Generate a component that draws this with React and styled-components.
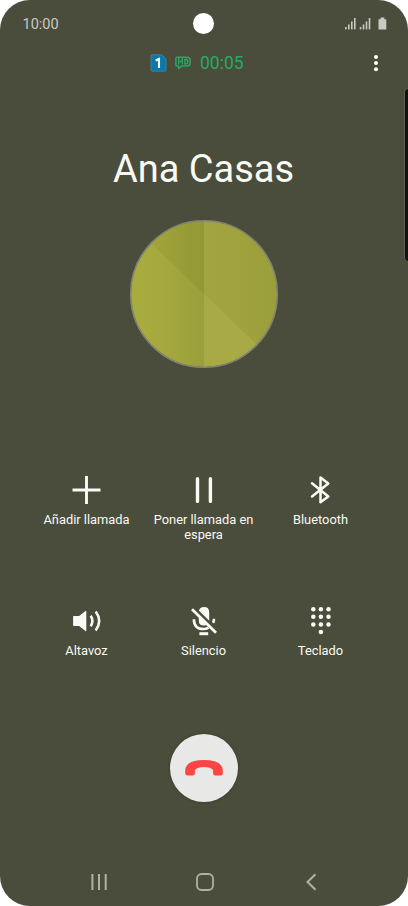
import React from "react";
import styled, { createGlobalStyle } from "styled-components";

const GlobalStyle = createGlobalStyle`
  * { box-sizing: border-box; }
  body { margin: 0; background: #fff; font-family: Roboto, "Noto Sans", sans-serif; }
  svg { display: block; flex: none; }
`;

const Screen = styled.main`
  position: relative;
  display: flex;
  flex-direction: column;
  width: 408px;
  height: 906px;
  overflow: hidden;
  border-radius: 30px;
  background: #4a4d3b;
  color: #fafaf5;
`;

const StatusBar = styled.header`
  display: grid;
  grid-template-columns: 1fr 21px 1fr;
  align-items: center;
  height: 47px;
  padding: 0 21.5px 0 22.5px;
  color: #c9cac2;
`;

const Clock = styled.time`
  padding-top: 1px;
  font-size: 14.5px;
  line-height: 17px;
`;

const Camera = styled.span`
  width: 21px;
  height: 21px;
  margin-left: -1px;
  border-radius: 50%;
  background: #fff;
`;

const StatusIcons = styled.div`
  display: flex;
  justify-content: flex-end;
`;

const CallBar = styled.section`
  display: flex;
  align-items: center;
  height: 32px;
  padding: 0 27px 0 150px;
  color: #28a866;
`;

const HdIcon = styled.svg`
  margin: 0 9px 0 8px;
`;

const Timer = styled.span`
  flex: 1;
  font-size: 17.5px;
  line-height: 20px;
`;

const MenuButton = styled.button`
  padding: 0;
  border: 0;
  background: none;
  color: #fff;
`;

const CallerName = styled.h1`
  margin: 67px 1px 0 0;
  font-size: 38px;
  font-weight: 400;
  line-height: 46px;
  text-align: center;
`;

const Avatar = styled.div`
  align-self: center;
  width: 150px;
  height: 150px;
  margin: 27px 1px 0 0;
`;

const Actions = styled.section`
  display: grid;
  grid-template-columns: repeat(3, 117px);
  grid-auto-rows: 131px;
  margin: 101px 0 0 28px;
`;

const Action = styled.button`
  display: flex;
  flex-direction: column;
  align-items: center;
  padding: 0;
  border: 0;
  background: none;
  color: #fafaf5;
  font-family: inherit;
`;

const ActionLabel = styled.span`
  max-width: 110px;
  margin-top: 2px;
  font-size: 12.85px;
  line-height: 15px;
  text-align: center;
`;

const EndCall = styled.button`
  display: grid;
  place-items: center;
  align-self: center;
  width: 68px;
  height: 68px;
  margin: 2px 1px 0 0;
  padding: 0;
  border: 0;
  border-radius: 50%;
  background: #e8e8e6;
  box-shadow: 0 0 3px rgba(20, 22, 14, 0.35);
`;

const NavBar = styled.nav`
  display: flex;
  justify-content: space-between;
  margin-top: auto;
  height: 48px;
  padding: 14px 87px 0 87.5px;
`;

const SideKey = styled.span`
  position: absolute;
  top: 88px;
  right: -4px;
  width: 8px;
  height: 174px;
  border: 1px solid #5f6253;
  border-radius: 4px;
  background: #12130f;
`;

const Signal = ({ x }) => (
  <g transform={`translate(${x} 0)`} fill="currentColor">
    <rect x="0" y="9" width="1.6" height="2.4" />
    <rect x="3" y="6.5" width="1.6" height="4.9" />
    <rect x="6" y="3.5" width="1.6" height="7.9" />
    <rect x="9" y="0" width="1.6" height="11.4" />
  </g>
);

const icons = {
  add: <path d="M19.5 6v28M5.5 20h28" strokeWidth="2.9" />,
  hold: <path d="M13.5 8.8v22.6M26.4 8.8v22.6" strokeWidth="3.4" strokeLinecap="round" />,
  bluetooth: (
    <path d="M11 13.3 27.3 26.5 19.5 32.3V7.4L27.3 13.5 11 26.5" strokeWidth="2.5" strokeLinecap="round" strokeLinejoin="round" />
  ),
  speaker: (
    <>
      <path d="M6.9 15h5.2l6.4-5q.8-.5.8.5v19q0 1-.8.5l-6.4-5H6.9q-.8 0-.8-.8v-8.4q0-.8.8-.8Z" fill="currentColor" stroke="none" />
      <path d="M23.7 14.8q3.4 5.2 0 10.4M28.7 10.5q7 9.5 0 19" strokeWidth="2.6" />
    </>
  ),
  mute: (
    <>
      <path d="M14.8 9.4Q16.3 6 20 6q5.2 0 5.2 5.2v8.5ZM14.8 13.4 23.7 23.2Q22 24.6 20 24.6q-5.2 0-5.2-5.2Z" fill="currentColor" stroke="none" />
      <path d="M9.9 18.2q0 9.8 9.6 9.8 2.8 0 5-1.4M30 17.8q0 2.2-.9 4" strokeWidth="2.6" />
      <path d="M8 8.2 32 31.7" strokeWidth="2.8" />
      <path d="M15.4 32.7h8.8" strokeWidth="3" />
    </>
  ),
  keypad: (
    <g fill="currentColor" stroke="none">
      {[8.3, 15.8, 23.4].flatMap((y) => [12.3, 19.9, 27.5].map((x) => <circle key={`${x}-${y}`} cx={x} cy={y} r="2.25" />))}
      <circle cx="19.9" cy="31" r="2.25" />
    </g>
  ),
};

const actions = [
  ["add", "Añadir llamada"],
  ["hold", "Poner llamada en espera"],
  ["bluetooth", "Bluetooth"],
  ["speaker", "Altavoz"],
  ["mute", "Silencio"],
  ["keypad", "Teclado"],
];

export default function App() {
  return (
    <>
      <GlobalStyle />
      <Screen>
        <StatusBar>
          <Clock>10:00</Clock>
          <Camera />
          <StatusIcons>
            <svg width="42" height="13" viewBox="0 0 42 13">
              <g transform="translate(0 1)">
                <Signal x={0} />
                <Signal x={14.7} />
              </g>
              <path d="M33.5 2.2h2V.6h3.8v1.6h2v10.3h-7.8Z" fill="currentColor" />
            </svg>
          </StatusIcons>
        </StatusBar>

        <CallBar>
          <svg width="17" height="18" viewBox="0 0 17 18">
            <path d="M1 2q0-1.2 1.2-1.2H12L16 5v11q0 1.2-1.2 1.2H2.2Q1 17.2 1 16Z" fill="#0878ad" stroke="#4c97b8" strokeWidth=".6" />
            <path d="M5.7 6.5 9 5v9" fill="none" stroke="#fff" strokeWidth="2.1" />
          </svg>
          <HdIcon width="16" height="16" viewBox="0 0 16 16" fill="none" stroke="currentColor" strokeWidth="1.5" strokeLinejoin="round">
            <path d="M3.6 11H2q-1.1 0-1.1-1.1V3.4Q.9 2.2 2 2.2h10.2q2.9 0 2.9 2.9v3q0 2.9-2.9 2.9H6.5l-2.9 2.6Z" />
            <path d="M3.7 3v6.5M3.7 6.4h3.6M7.3 3v6.5M9.9 4.2V9h1q1.8 0 1.8-1.7V5.9q0-1.7-1.8-1.7Z" strokeWidth="1.4" />
          </HdIcon>
          <Timer>00:05</Timer>
          <MenuButton aria-label="Más opciones">
            <svg width="10" height="18" viewBox="0 0 10 18" fill="currentColor">
              <circle cx="5" cy="3" r="2" />
              <circle cx="5" cy="9" r="2" />
              <circle cx="5" cy="15.2" r="2" />
            </svg>
          </MenuButton>
        </CallBar>

        <CallerName>Ana Casas</CallerName>

        <Avatar>
          <svg width="150" height="150" viewBox="0 0 150 150">
            <defs>
              <linearGradient id="left">
                <stop offset="0" stopColor="#a9ad3d" />
                <stop offset=".4" stopColor="#a6a93d" />
                <stop offset="1" stopColor="#9b9f3b" />
              </linearGradient>
              <linearGradient id="top">
                <stop offset="0" stopColor="#a5a83b" />
                <stop offset="1" stopColor="#939735" />
              </linearGradient>
              <linearGradient id="right">
                <stop offset="0" stopColor="#a2a440" />
                <stop offset="1" stopColor="#9b9f3a" />
              </linearGradient>
              <clipPath id="disc"><circle cx="75" cy="75" r="73" /></clipPath>
            </defs>
            <g clipPath="url(#disc)">
              <rect x="75" width="75" height="150" fill="#a8aa45" />
              <rect width="75" height="150" fill="url(#left)" />
              <path d="M20 22.5 10 0h65v75Z" fill="url(#top)" />
              <path d="M75 0h75v147L75 75Z" fill="url(#right)" />
            </g>
            <circle cx="75" cy="75" r="73.3" fill="none" stroke="#838573" strokeWidth="1.6" />
          </svg>
        </Avatar>

        <Actions>
          {actions.map(([icon, label]) => (
            <Action key={icon}>
              <svg width="40" height="40" viewBox="0 0 40 40" fill="none" stroke="currentColor">{icons[icon]}</svg>
              <ActionLabel>{label}</ActionLabel>
            </Action>
          ))}
        </Actions>

        <EndCall aria-label="Finalizar llamada">
          <svg width="40" height="20" viewBox="0 0 40 20">
            <path d="M1.2 12.5Q1.6 2 20 2t18.8 10.5v2.8q0 2.2-2.2 2.2h-5.2q-2.3 0-2.3-2.2v-3.4Q26.5 9 20 9t-9.1 2.9v3.4q0 2.2-2.3 2.2H3.4q-2.2 0-2.2-2.2Z" fill="#fb4545" />
          </svg>
        </EndCall>

        <NavBar>
          <svg width="21" height="20" viewBox="0 0 21 20" stroke="#b0b1a6" strokeWidth="2">
            <path d="M4.4 2v16M11 2v16M17.7 2v16" />
          </svg>
          <svg width="20" height="20" viewBox="0 0 20 20" fill="none" stroke="#b0b1a6" strokeWidth="1.8">
            <rect x="2" y="2" width="16" height="16" rx="4.5" />
          </svg>
          <svg width="20" height="20" viewBox="0 0 20 20" fill="none" stroke="#b0b1a6" strokeWidth="2">
            <path d="m14.5 2.2-8 7.8 8 7.8" />
          </svg>
        </NavBar>
        <SideKey />
      </Screen>
    </>
  );
}
